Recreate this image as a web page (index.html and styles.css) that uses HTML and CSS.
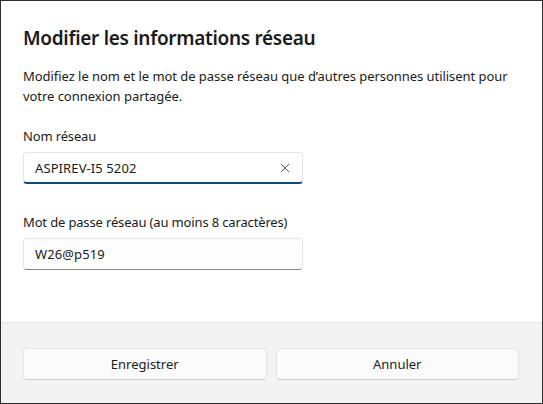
FILE: index.html
```html
<!DOCTYPE html>
<html lang="fr">
<head>
<meta charset="utf-8">
<title>Modifier les informations réseau</title>
<link rel="stylesheet" href="styles.css">
</head>
<body>
<div class="dialog">
  <div class="content">
    <h1 class="title">Modifier les informations réseau</h1>
    <p class="desc">Modifiez le nom et le mot de passe réseau que d’autres personnes utilisent pour votre connexion partagée.</p>
    <div class="field">
      <div class="label">Nom réseau</div>
      <div class="input focused">
        <span class="value">ASPIREV-I5 5202</span>
        <svg class="clear" width="10" height="10" viewBox="0 0 10 10"><path d="M1 1 L9 9 M9 1 L1 9" stroke="#5c5c5c" stroke-width="1" fill="none"/></svg>
      </div>
    </div>
    <div class="field second">
      <div class="label">Mot de passe réseau (au moins 8 caractères)</div>
      <div class="input">
        <span class="value">W26@p519</span>
      </div>
    </div>
  </div>
  <div class="footer">
    <button class="btn">Enregistrer</button>
    <button class="btn">Annuler</button>
  </div>
</div>
</body>
</html>
```

FILE: styles.css
```css
* { box-sizing: border-box; }
html, body { margin: 0; padding: 0; }
body {
  width: 543px;
  height: 404px;
  font-family: "Noto Sans", "Open Sans", sans-serif;
  color: #1b1b1b;
  background: #ffffff;
}
.dialog {
  width: 543px;
  height: 404px;
  border: 1px solid #2e2e2e;
  display: flex;
  flex-direction: column;
  background: #ffffff;
}
.content {
  flex: 1;
  padding: 23px 22px 0 22px;
}
.title {
  margin: 0;
  font-size: 19px;
  font-weight: 600;
  letter-spacing: -0.3px;
  line-height: 28px;
}
.desc {
  margin: 14px 0 0 0;
  font-size: 13px;
  letter-spacing: -0.05px;
  line-height: 20px;
}
.field { margin-top: 20px; }
.field.second { margin-top: 28px; }
.label {
  font-size: 13px;
  letter-spacing: -0.15px;
  line-height: 20px;
}
.input {
  margin-top: 6px;
  width: 280px;
  height: 32px;
  border: 1px solid #e5e5e5;
  border-bottom: 1px solid #8a8a8a;
  border-radius: 4px;
  background: #fdfdfd;
  display: flex;
  align-items: center;
  padding: 0 12px 0 11px;
  font-size: 13px;
  letter-spacing: 0.1px;
}
.input.focused {
  background: #ffffff;
  border-bottom: 2px solid #0f4a7f;
}
.value { flex: 1; }
.clear { display: block; }
.footer {
  height: 81px;
  background: #f3f3f3;
  border-top: 1px solid #e5e5e5;
  padding: 25px 23px 0 22px;
  display: flex;
  gap: 9px;
  align-items: flex-start;
}
.btn {
  flex: 1;
  height: 32px;
  border: 1px solid #e5e5e5;
  border-bottom-color: #cccccc;
  border-radius: 4px;
  background: #fbfbfb;
  font-family: inherit;
  font-size: 13px;
  letter-spacing: 0;
  color: #1b1b1b;
  padding: 0;
}
```
